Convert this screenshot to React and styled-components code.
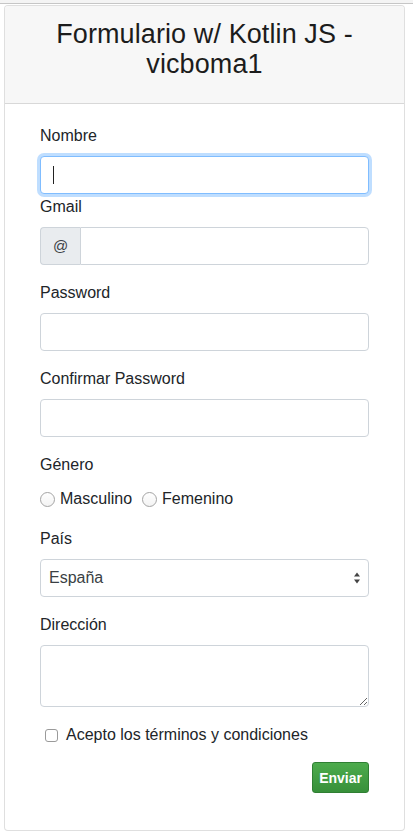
import React from 'react';
import styled, { createGlobalStyle } from 'styled-components';

const GlobalStyle = createGlobalStyle`
  html, body {
    margin: 0;
    padding: 0;
    background: #fff;
  }
  body {
    font-family: "Liberation Sans", Arial, sans-serif;
    font-size: 16px;
    line-height: 1.5;
    color: #212529;
  }
  * { box-sizing: border-box; }
`;

const TopStrip = styled.div`
  height: 4px;
  background: #f4f4f4;
  border-bottom: 1px solid #c6c6c6;
`;

const Card = styled.div`
  width: 401px;
  margin: 1px 0 0 4px;
  border: 1px solid rgba(0, 0, 0, 0.125);
  border-radius: 4px;
  background: #fff;
`;

const CardHeader = styled.div`
  background: #f7f7f7;
  border-bottom: 1px solid rgba(0, 0, 0, 0.125);
  border-radius: 3px 3px 0 0;
  padding: 13px 20px 24px;
  text-align: center;
`;

const Title = styled.h3`
  margin: 0;
  font-size: 27px;
  font-weight: 400;
  line-height: 30px;
  letter-spacing: 0.1px;
  color: #1c1c1c;
`;

const CardBody = styled.form`
  padding: 20px 35px 21px;
`;

const Group = styled.div`
  margin-bottom: ${p => (p.$tight ? '1px' : '16px')};
`;

const Label = styled.label`
  display: block;
  margin-bottom: 8px;
  line-height: 24px;
`;

const Input = styled.input`
  display: block;
  width: 100%;
  min-width: 0;
  height: 38px;
  padding: 6px 12px;
  font: inherit;
  color: #495057;
  background: #fff;
  border: 1px solid ${p => (p.$focus ? '#80bdff' : '#ced4da')};
  border-radius: ${p => (p.$joined ? '0 4px 4px 0' : '4px')};
  box-shadow: ${p => (p.$focus ? '0 0 0 3px rgba(0, 123, 255, 0.25)' : 'none')};
  outline: none;
`;

const FieldWrap = styled.div`
  position: relative;
`;

const Caret = styled.span`
  position: absolute;
  left: 13px;
  top: 10px;
  width: 1px;
  height: 18px;
  background: #222;
`;

const InputGroup = styled.div`
  display: flex;
  align-items: stretch;
`;

const Addon = styled.span`
  flex: none;
  display: flex;
  align-items: center;
  justify-content: center;
  width: 40px;
  height: 38px;
  background: #e9ecef;
  border: 1px solid #ced4da;
  border-right: none;
  border-radius: 4px 0 0 4px;
  color: #3d4247;
  font-size: 15px;
`;

const RadioRow = styled.div`
  display: flex;
  align-items: center;
  height: 26px;
  padding-top: 2px;
`;

const RadioLabel = styled.label`
  display: flex;
  align-items: center;
  margin-right: 10px;
`;

const Radio = styled.input.attrs({ type: 'radio' })`
  appearance: none;
  width: 15px;
  height: 15px;
  margin: 1px 5px 0 0;
  border: 1px solid #a4a4a4;
  border-radius: 50%;
  background: linear-gradient(#fff, #f3f3f3);
`;

const SelectBox = styled.div`
  position: relative;
`;

const Select = styled.select`
  display: block;
  width: 100%;
  height: 38px;
  padding: 6px 8px;
  font: inherit;
  color: #3a3f44;
  background: #fff;
  border: 1px solid #ced4da;
  border-radius: 4px;
  appearance: none;
  outline: none;
`;

const Arrows = styled.svg`
  position: absolute;
  right: 8px;
  top: 12px;
  pointer-events: none;
`;

const TextArea = styled.textarea`
  display: block;
  width: 100%;
  height: 62px;
  padding: 6px 12px;
  font: inherit;
  color: #495057;
  border: 1px solid #ced4da;
  border-radius: 4px;
  outline: none;
`;

const CheckRow = styled.label`
  display: flex;
  align-items: center;
  padding-left: 5px;
  line-height: 24px;
`;

const Check = styled.input.attrs({ type: 'checkbox' })`
  appearance: none;
  width: 13px;
  height: 13px;
  margin: 1px 8px 0 0;
  border: 1px solid #9a9a9a;
  border-radius: 3px;
  background: #fff;
`;

const Actions = styled.div`
  display: flex;
  justify-content: flex-end;
  margin-top: 15px;
  margin-bottom: 16px;
`;

const Button = styled.button`
  height: 31px;
  padding: 0 6px;
  font-family: "Liberation Sans", Arial, sans-serif;
  font-size: 14px;
  font-weight: 700;
  color: #fff;
  background: linear-gradient(#4dab4d, #37903a);
  border: 1px solid #2f7f33;
  border-radius: 3px;
`;

export default function App() {
  return (
    <>
      <GlobalStyle />
      <TopStrip />
      <Card>
        <CardHeader>
          <Title>Formulario w/ Kotlin JS -<br />vicboma1</Title>
        </CardHeader>
        <CardBody onSubmit={e => e.preventDefault()}>
          <Group $tight>
            <Label>Nombre</Label>
            <FieldWrap>
              <Input $focus />
              <Caret />
            </FieldWrap>
          </Group>
          <Group>
            <Label>Gmail</Label>
            <InputGroup>
              <Addon>@</Addon>
              <Input $joined />
            </InputGroup>
          </Group>
          <Group>
            <Label>Password</Label>
            <Input type="password" />
          </Group>
          <Group>
            <Label>Confirmar Password</Label>
            <Input type="password" />
          </Group>
          <Group>
            <Label>Género</Label>
            <RadioRow>
              <RadioLabel><Radio name="g" />Masculino</RadioLabel>
              <RadioLabel><Radio name="g" />Femenino</RadioLabel>
            </RadioRow>
          </Group>
          <Group>
            <Label>País</Label>
            <SelectBox>
              <Select defaultValue="es">
                <option value="es">España</option>
              </Select>
              <Arrows width="8" height="14" viewBox="0 0 8 14">
                <path d="M4 1.5 L7 5.5 H1 Z" fill="#444" />
                <path d="M4 12.5 L7 8.5 H1 Z" fill="#444" />
              </Arrows>
            </SelectBox>
          </Group>
          <Group>
            <Label>Dirección</Label>
            <TextArea />
          </Group>
          <CheckRow>
            <Check />
            Acepto los términos y condiciones
          </CheckRow>
          <Actions>
            <Button type="submit">Enviar</Button>
          </Actions>
        </CardBody>
      </Card>
    </>
  );
}
